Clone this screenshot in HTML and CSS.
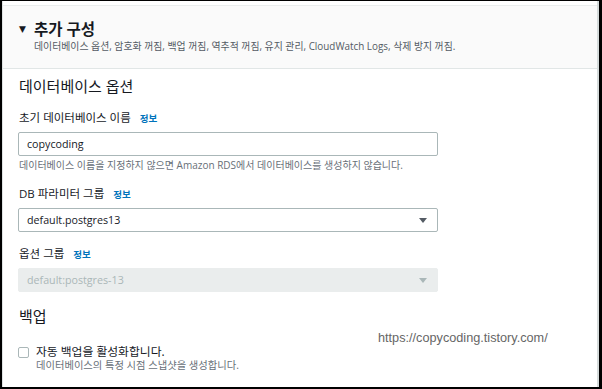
FILE: index.html
```html
<!DOCTYPE html>
<html lang="ko">
<head>
  <meta charset="UTF-8" />
  <meta name="viewport" content="width=device-width, initial-scale=1" />
  <title>추가 구성</title>
  <link rel="stylesheet" href="styles.css">
</head>
<body>
  <div class="frame">
    <div class="panel-header">
      <div class="header-title">
        <span class="caret-down">&#9660;</span>
        <h2>추가 구성</h2>
      </div>
      <p class="header-summary">데이터베이스 옵션, 암호화 꺼짐, 백업 꺼짐, 역추적 꺼짐, 유지 관리, CloudWatch Logs, 삭제 방지 꺼짐.</p>
    </div>

    <div class="panel-body">
      <h3 class="section-title">데이터베이스 옵션</h3>

      <div class="field">
        <label class="field-label">초기 데이터베이스 이름 <a class="info">정보</a></label>
        <div class="input-box">copycoding</div>
        <p class="field-help">데이터베이스 이름을 지정하지 않으면 Amazon RDS에서 데이터베이스를 생성하지 않습니다.</p>
      </div>

      <div class="field">
        <label class="field-label">DB 파라미터 그룹 <a class="info">정보</a></label>
        <div class="input-box select">
          <span>default.postgres13</span>
          <span class="select-caret"></span>
        </div>
      </div>

      <div class="field">
        <label class="field-label">옵션 그룹 <a class="info">정보</a></label>
        <div class="input-box select disabled">
          <span>default:postgres-13</span>
          <span class="select-caret"></span>
        </div>
      </div>

      <h3 class="section-title backup-title">백업</h3>

      <div class="check-row">
        <span class="checkbox"></span>
        <div class="check-text">
          <div class="check-label">자동 백업을 활성화합니다.</div>
          <div class="check-help">데이터베이스의 특정 시점 스냅샷을 생성합니다.</div>
        </div>
      </div>
    </div>

    <div class="watermark">https://copycoding.tistory.com/</div>
  </div>
</body>
</html>
```

FILE: styles.css
```css
:root {
  --text: #16191f;
  --muted: #687078;
  --link: #0073bb;
  --line: #eaeded;
  --input-border: #aab7b8;
}

* {
  box-sizing: border-box;
  margin: 0;
  padding: 0;
}

html, body {
  height: 100%;
}

body {
  background: #000;
  padding: 1px 3px 2px 2px;
  font-family: 'Open Sans', 'Noto Sans CJK KR', sans-serif;
  color: var(--text);
}

.frame {
  position: relative;
  height: 100%;
  background: #fff;
  border-left: 1px solid #dfe3e3;
  border-right: 2px solid #d5dbdb;
  overflow: hidden;
}

/* Header */
.panel-header {
  margin-top: 4px;
  height: 64px;
  background: #fafafa;
  border-top: 1px solid var(--line);
  border-bottom: 1px solid #e1e6e6;
  padding: 13px 0 0 16px;
}

.header-title {
  display: flex;
  align-items: center;
  height: 20px;
}

.caret-down {
  font-size: 9px;
  width: 15px;
  color: #16191f;
  font-family: 'DejaVu Sans', sans-serif;
}

.header-title h2 {
  font-size: 15.5px;
  font-weight: 700;
  line-height: 20px;
}

.header-summary {
  margin: 1px 0 0 15px;
  font-size: 9.9px;
  line-height: 13px;
  color: #545b64;
}

/* Body */
.panel-body {
  padding: 7px 15px 0 15px;
}

.section-title {
  font-size: 15px;
  font-weight: 400;
  line-height: 20px;
  margin-left: 1px;
  margin-bottom: 14px;
}

.field {
  margin-bottom: 14px;
}

.field-label {
  display: flex;
  align-items: baseline;
  height: 16px;
  font-size: 11.5px;
  line-height: 16px;
  margin-left: 1px;
  margin-bottom: 6px;
}

.info {
  color: var(--link);
  font-weight: 700;
  font-size: 9.5px;
  line-height: 16px;
  margin-left: 9px;
}

.input-box {
  display: flex;
  align-items: center;
  justify-content: space-between;
  width: 420px;
  height: 24px;
  padding: 0 10px 0 8px;
  border: 1px solid var(--input-border);
  border-radius: 2px;
  font-size: 10.7px;
}

.field-help {
  margin-top: 3px;
  margin-left: 1px;
  font-size: 10px;
  line-height: 13px;
  color: var(--muted);
}

.select-caret {
  width: 0;
  height: 0;
  border-left: 4px solid transparent;
  border-right: 4px solid transparent;
  border-top: 5px solid #545b64;
}

.input-box.disabled {
  background: #eaeded;
  border-color: #eaeded;
  color: #aab7b8;
}

.input-box.disabled .select-caret {
  border-top-color: #aab7b8;
}

.backup-title {
  margin-top: 2px;
  margin-bottom: 17px;
}

.check-row {
  display: flex;
  align-items: flex-start;
  gap: 7px;
}

.checkbox {
  width: 11px;
  height: 11px;
  margin-top: 4px;
  border: 1px solid var(--input-border);
  border-radius: 2px;
}

.check-label {
  font-size: 11.8px;
  line-height: 16px;
}

.check-help {
  font-size: 10.3px;
  line-height: 13px;
  color: var(--muted);
}

.watermark {
  position: absolute;
  left: 375px;
  top: 330px;
  font-family: 'Liberation Sans', sans-serif;
  font-size: 12.7px;
  color: #666;
}
```
